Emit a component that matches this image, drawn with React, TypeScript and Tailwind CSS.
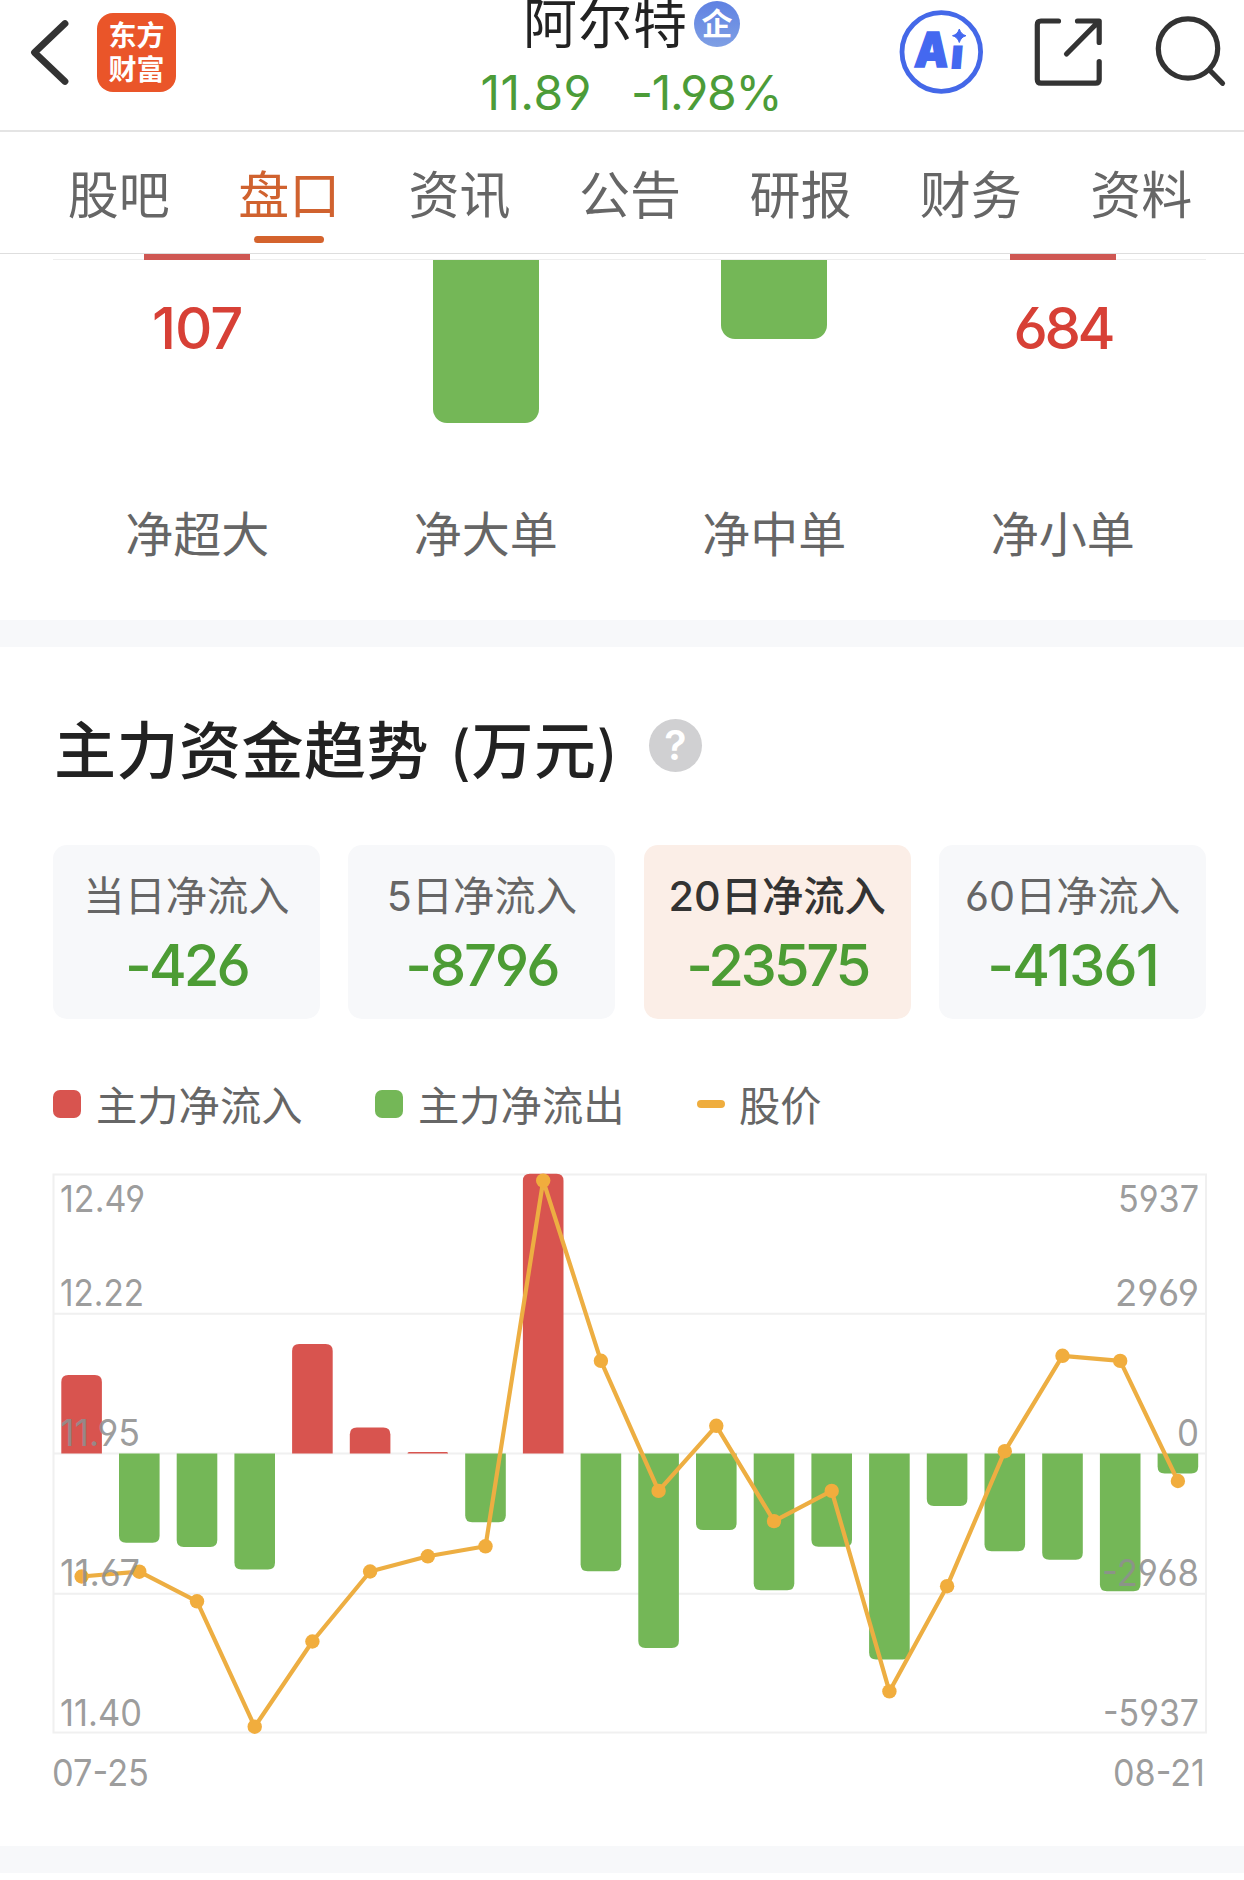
import React from "react";

const bars = [
  1375, 1542.7, 1547, 1569.5, 1344, 1427.5, 1452, 1522.2, 1173.7, 1571.3,
  1648, 1530, 1590.3, 1546.7, 1659.5, 1506, 1551.3, 1559.7, 1591.3, 1473.6,
];
const price = [
  1576.5, 1571.7, 1601.3, 1726.7, 1641.5, 1571.5, 1556.3, 1546.3, 1180.6, 1360.8,
  1490.9, 1425.8, 1521.1, 1490.9, 1691.4, 1586.2, 1451.2, 1355.8, 1360.9, 1481,
];
const ZERO = 1453.5;
const cx = (i: number) => 81.6 + i * 57.7;

function barPath(i: number, end: number) {
  const l = cx(i) - 20.3;
  const r = cx(i) + 20.3;
  const up = end < ZERO;
  const rad = Math.min(7, Math.abs(end - ZERO));
  const k = up ? end + rad : end - rad;
  return `M${l} ${ZERO}V${k}Q${l} ${end} ${l + rad} ${end}H${r - rad}Q${r} ${end} ${r} ${k}V${ZERO}Z`;
}

const tabs = ["股吧", "盘口", "资讯", "公告", "研报", "财务", "资料"];

const flows = [
  { label: "净超大", value: "107", tracking: "tracking-[-1px]", bar: "h-[6px] bg-[#cf5753]" },
  { label: "净大单", value: "", tracking: "", bar: "mt-[6px] h-[163px] rounded-b-[14px] bg-[#74b757]" },
  { label: "净中单", value: "", tracking: "", bar: "mt-[6px] h-[79px] rounded-b-[14px] bg-[#74b757]" },
  { label: "净小单", value: "684", tracking: "tracking-[-3.5px]", bar: "h-[6px] bg-[#cf5753]" },
];

const cards = [
  { label: "当日净流入", value: "-426", active: false, tracking: "tracking-[-3px]" },
  { label: "5日净流入", value: "-8796", active: false, tracking: "tracking-[-2.3px]" },
  { label: "20日净流入", value: "-23575", active: true, tracking: "tracking-[-3.3px]" },
  { label: "60日净流入", value: "-41361", active: false, tracking: "tracking-[-1.9px]" },
];

const leftAxis: [string, number, number][] = [
  ["12.49", 1212, 82],
  ["12.22", 1306, 81],
  ["11.95", 1446, 77],
  ["11.67", 1586, 77],
  ["11.40", 1726, 79],
];
const rightAxis: [string, number, number][] = [
  ["5937", 1212, 78],
  ["2969", 1306, 81],
  ["0", 1446, 19],
  ["-2968", 1586, 94],
  ["-5937", 1726, 93],
];

function Header() {
  return (
    <header className="flex h-[132px] border-b-2 border-[#e4e4e4]">
      <div className="flex w-[420px] pl-[28px] pt-[12px]">
        <svg className="mt-[5px] h-[72px] w-[44px]" viewBox="28 17 44 72" fill="none" stroke="#333" strokeWidth="6.8">
          <path d="M65 23.5L34.5 52.5L65 81.5" strokeLinecap="round" strokeLinejoin="round" />
        </svg>
        <div className="ml-[25px] mt-[1px] flex h-[79px] w-[79px] flex-col items-center justify-center rounded-[16px] bg-[#ea5529] text-[28px] font-bold leading-[34px] text-white">
          <span>东方</span>
          <span>财富</span>
        </div>
      </div>
      <div className="flex w-[422px] flex-col items-center">
        <div className="ml-[1px] flex h-[47px] items-center">
          <span className="mt-[3px] text-[54px] leading-[60px] tracking-[1px] text-[#222]">阿尔特</span>
          <span className="ml-[6px] flex h-[46px] w-[46px] items-center justify-center rounded-full bg-linear-to-b from-[#5f81e2] to-[#7f9fe4] text-[31px] font-bold leading-none text-white">
            企
          </span>
        </div>
        <div className="mt-[20px] flex gap-[39px] text-[48px] leading-[52px] text-[#4c9c38]">
          <span className="tracking-[0.4px]">11.89</span>
          <span className="tracking-[-1.2px]">-1.98%</span>
        </div>
      </div>
      <div className="flex flex-1">
        <svg className="h-[100px] w-full" viewBox="842 0 402 100" fill="none">
          <circle cx="941.3" cy="52" r="39.3" stroke="#4468e8" strokeWidth="4.8" />
          <text x="914" y="67.5" fontSize="48" fontWeight="900" fill="#4468f0" stroke="#4468f0" strokeWidth="1.5" textLength="34" lengthAdjust="spacingAndGlyphs" transform="skewX(-4) translate(4.5 0)">A</text>
          <text x="950" y="69" fontSize="43" fontWeight="900" fill="#4468f0" transform="skewX(-5) translate(5 0)" textLength="14" lengthAdjust="spacingAndGlyphs">ı</text>
          <path d="M959.3 29Q961 34.5 966 35.7Q961 37 959.3 42.5Q957.6 37 952.5 35.7Q957.6 34.5 959.3 29Z" fill="#4468f0" stroke="#4468f0" />
          <g stroke="#333" strokeWidth="5.2" strokeLinecap="round" strokeLinejoin="round">
            <path d="M1058.5 21H1041Q1037.3 21 1037.3 24.7V79.5Q1037.3 83.2 1041 83.2H1095.5Q1099.2 83.2 1099.2 79.5V61.5" />
            <path d="M1077.5 21H1099.2V42.5M1099 21.2L1066.5 54" />
            <circle cx="1188" cy="48.5" r="29.7" />
            <path d="M1210 70.5L1222.5 83.3" />
          </g>
        </svg>
      </div>
    </header>
  );
}

function Tabs() {
  return (
    <nav className="flex h-[122px] border-b border-[#dedede] pl-[33.5px] pr-[17.5px]">
      {tabs.map((t, i) => (
        <div key={t} className={i === 1 ? "flex flex-1 flex-col items-center text-[#d0622f]" : "flex flex-1 flex-col items-center text-[#666]"}>
          <span className="mt-[34px] text-[51px] leading-[60px]">{t}</span>
          {i === 1 && <span className="mt-[10px] h-[7px] w-[70px] rounded-full bg-[#d4632d]" />}
        </div>
      ))}
    </nav>
  );
}

function OrderFlow() {
  return (
    <section className="relative h-[366px] pl-[53px]">
      <div className="absolute left-[53px] right-[38px] top-[5px] h-px bg-[#eee]" />
      <div className="relative grid w-[1154px] grid-cols-4">
        {flows.map((f) => (
          <div key={f.label} className="flex h-[320px] flex-col items-center">
            <div className={`w-[106px] shrink-0 ${f.bar}`} />
            {f.value && <div className={`mt-[38px] text-[58px] font-medium leading-[60px] text-[#d74036] ${f.tracking}`}>{f.value}</div>}
            <div className="mt-auto pb-[9px] text-[48px] leading-[60px] text-[#666]">{f.label}</div>
          </div>
        ))}
      </div>
    </section>
  );
}

function Chart() {
  return (
    <svg className="mt-[30px] block h-[640px] w-[1244px]" viewBox="0 1160 1244 640" fill="none">
      <g stroke="#f0f0f0" strokeWidth="2">
        <rect x="53.5" y="1174.5" width="1152.5" height="558" />
        <path d="M53 1313.7H1206M53 1453.5H1206M53 1593.7H1206" />
      </g>
      {bars.map((b, i) => (
        <path key={i} d={barPath(i, b)} fill={b < ZERO ? "#d8544f" : "#74b757"} />
      ))}
      <polyline points={price.map((p, i) => `${cx(i)},${p}`).join(" ")} stroke="#edae42" strokeWidth="4.2" strokeLinejoin="round" />
      {price.map((p, i) => (
        <circle key={i} cx={cx(i)} cy={p} r="7.2" fill="#f1ad3d" />
      ))}
      <g fill="#8f8f8f" fillOpacity="0.88" fontSize="36.5">
        {leftAxis.map(([t, y, w]) => (
          <text key={t} x="60" y={y} textLength={w + 3} lengthAdjust="spacingAndGlyphs">{t}</text>
        ))}
        {rightAxis.map(([t, y, w]) => (
          <text key={t} x={1199 - w - 3} y={y} textLength={w + 3} lengthAdjust="spacingAndGlyphs">{t}</text>
        ))}
        <text x="52" y="1786" textLength="97" lengthAdjust="spacingAndGlyphs">07-25</text>
        <text x="1113" y="1786" textLength="92" lengthAdjust="spacingAndGlyphs">08-21</text>
      </g>
    </svg>
  );
}

function Trend() {
  return (
    <section className="h-[1199px]">
      <div className="flex items-center pl-[54px] pt-[58px]">
        <h2 className="relative top-[7px] text-[62px] font-medium leading-[80px] tracking-[0.5px] text-[#222]">
          主力资金趋势<span className="ml-[20px] text-[60px] font-normal">(</span>万元<span className="text-[60px] font-normal">)</span>
        </h2>
        <span className="ml-[30px] flex h-[53px] w-[53px] items-center justify-center rounded-full bg-[#d0d0d2] text-[41px] font-semibold leading-none text-white">?</span>
      </div>
      <div className="ml-[53px] mt-[60px] grid w-[1153px] grid-cols-4 gap-[28.6px]">
        {cards.map((c) => (
          <div key={c.label} className={c.active ? "flex h-[174px] flex-col items-center rounded-[14px] bg-[#fbeee7]" : "flex h-[174px] flex-col items-center rounded-[14px] bg-[#f7f8fa]"}>
            <span className={c.active ? "mt-[26px] text-[41.3px] font-medium leading-[50px] text-[#333]" : "mt-[26px] text-[41.3px] leading-[50px] text-[#666]"}>{c.label}</span>
            <span className={`mt-[14px] text-[58px] font-medium leading-[60px] text-[#4c9c34] ${c.tracking}`}>{c.value}</span>
          </div>
        ))}
      </div>
      <div className="ml-[53px] mt-[59px] flex h-[52px] items-center text-[41.3px] leading-[52px] text-[#666]">
        <span className="mr-[15px] h-[28px] w-[28px] rounded-[7px] bg-[#d8544f]" />
        <span className="relative top-[2px] w-[279px]">主力净流入</span>
        <span className="mr-[15px] h-[28px] w-[28px] rounded-[7px] bg-[#74b757]" />
        <span className="relative top-[2px] w-[279px]">主力净流出</span>
        <span className="mr-[14px] h-[8px] w-[28px] rounded-full bg-[#efad3e]" />
        <span className="relative top-[2px]">股价</span>
      </div>
      <Chart />
    </section>
  );
}

export default function App() {
  return (
    <div className="h-[1880px] w-[1244px] overflow-hidden bg-white font-['Inter','Noto_Sans_CJK_SC',sans-serif] [font-feature-settings:'cv03','cv04']">
      <Header />
      <Tabs />
      <OrderFlow />
      <div className="h-[27px] bg-[#f7f8fa]" />
      <Trend />
      <div className="h-[27px] bg-[#f7f8fa]" />
    </div>
  );
}
